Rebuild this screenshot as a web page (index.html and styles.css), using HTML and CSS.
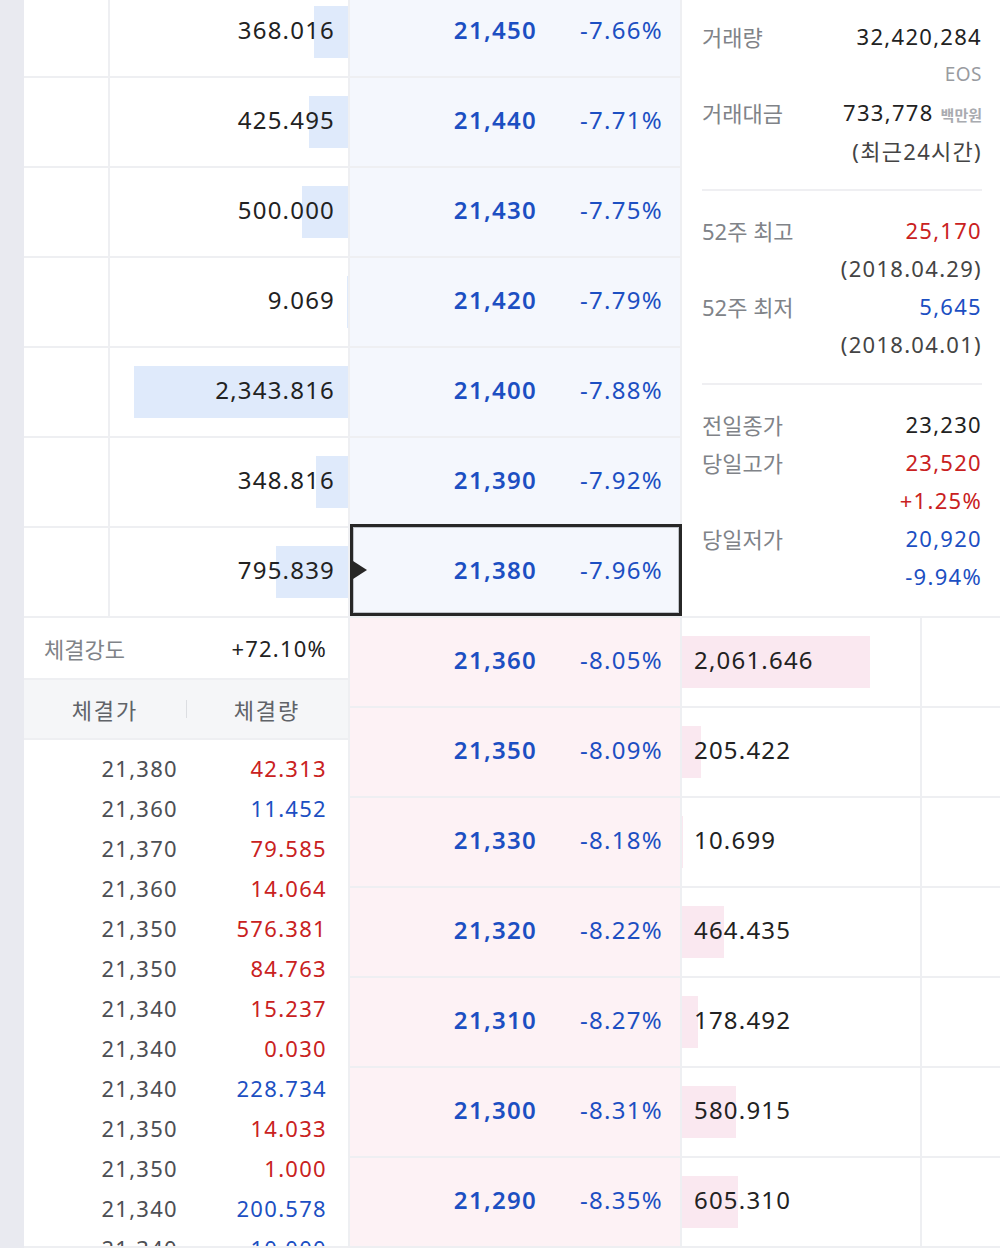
FILE: index.html
```html
<!DOCTYPE html>
<html lang="ko">
<head>
<meta charset="utf-8">
<title>호가</title>
<link rel="stylesheet" href="styles.css">
</head>
<body>
<div class="page">
  <section class="asks">
    <aside class="info">
      <div class="group first">
        <div class="irow"><span class="lbl">거래량</span><span class="val">32,420,284</span></div>
        <div class="irow"><span></span><span class="unit">EOS</span></div>
        <div class="irow"><span class="lbl">거래대금</span><span class="val">733,778 <small>백만원</small></span></div>
        <div class="irow"><span></span><span class="val sub">(최근24시간)</span></div>
      </div>
      <div class="group">
        <div class="irow"><span class="lbl">52주 최고</span><span class="val up">25,170</span></div>
        <div class="irow"><span></span><span class="val sub">(2018.04.29)</span></div>
        <div class="irow"><span class="lbl">52주 최저</span><span class="val down">5,645</span></div>
        <div class="irow"><span></span><span class="val sub">(2018.04.01)</span></div>
      </div>
      <div class="group last">
        <div class="irow"><span class="lbl">전일종가</span><span class="val">23,230</span></div>
        <div class="irow"><span class="lbl">당일고가</span><span class="val up">23,520</span></div>
        <div class="irow"><span></span><span class="val up">+1.25%</span></div>
        <div class="irow"><span class="lbl">당일저가</span><span class="val down">20,920</span></div>
        <div class="irow"><span></span><span class="val down">-9.94%</span></div>
      </div>
    </aside>

    <div class="blank"></div>
    <div class="vol ask-vol" style="--w:34px">368.016</div>
    <div class="price ask-price"><span class="p">21,450</span><span class="r">-7.66%</span></div>

    <div class="blank"></div>
    <div class="vol ask-vol" style="--w:39px">425.495</div>
    <div class="price ask-price"><span class="p">21,440</span><span class="r">-7.71%</span></div>

    <div class="blank"></div>
    <div class="vol ask-vol" style="--w:46px">500.000</div>
    <div class="price ask-price"><span class="p">21,430</span><span class="r">-7.75%</span></div>

    <div class="blank"></div>
    <div class="vol ask-vol" style="--w:1px">9.069</div>
    <div class="price ask-price"><span class="p">21,420</span><span class="r">-7.79%</span></div>

    <div class="blank"></div>
    <div class="vol ask-vol" style="--w:214px">2,343.816</div>
    <div class="price ask-price"><span class="p">21,400</span><span class="r">-7.88%</span></div>

    <div class="blank"></div>
    <div class="vol ask-vol" style="--w:32px">348.816</div>
    <div class="price ask-price"><span class="p">21,390</span><span class="r">-7.92%</span></div>

    <div class="blank"></div>
    <div class="vol ask-vol" style="--w:72px">795.839</div>
    <div class="price ask-price sel"><span class="p">21,380</span><span class="r">-7.96%</span></div>
  </section>

  <section class="bids">
    <div class="trades">
      <div class="strength"><span class="slbl">체결강도</span><span class="sval">+72.10%</span></div>
      <div class="thead"><span>체결가</span><span class="th2">체결량</span></div>
      <div class="tlist">
        <span class="tp">21,380</span><span class="tv up">42.313</span>
        <span class="tp">21,360</span><span class="tv down">11.452</span>
        <span class="tp">21,370</span><span class="tv up">79.585</span>
        <span class="tp">21,360</span><span class="tv up">14.064</span>
        <span class="tp">21,350</span><span class="tv up">576.381</span>
        <span class="tp">21,350</span><span class="tv up">84.763</span>
        <span class="tp">21,340</span><span class="tv up">15.237</span>
        <span class="tp">21,340</span><span class="tv up">0.030</span>
        <span class="tp">21,340</span><span class="tv down">228.734</span>
        <span class="tp">21,350</span><span class="tv up">14.033</span>
        <span class="tp">21,350</span><span class="tv up">1.000</span>
        <span class="tp">21,340</span><span class="tv down">200.578</span>
        <span class="tp">21,340</span><span class="tv down">10.000</span>
      </div>
    </div>

    <div class="price bid-price"><span class="p">21,360</span><span class="r">-8.05%</span></div>
    <div class="vol bid-vol" style="--w:188px">2,061.646</div>
    <div class="blank"></div>

    <div class="price bid-price"><span class="p">21,350</span><span class="r">-8.09%</span></div>
    <div class="vol bid-vol" style="--w:19px">205.422</div>
    <div class="blank"></div>

    <div class="price bid-price"><span class="p">21,330</span><span class="r">-8.18%</span></div>
    <div class="vol bid-vol" style="--w:1px">10.699</div>
    <div class="blank"></div>

    <div class="price bid-price"><span class="p">21,320</span><span class="r">-8.22%</span></div>
    <div class="vol bid-vol" style="--w:42px">464.435</div>
    <div class="blank"></div>

    <div class="price bid-price"><span class="p">21,310</span><span class="r">-8.27%</span></div>
    <div class="vol bid-vol" style="--w:16px">178.492</div>
    <div class="blank"></div>

    <div class="price bid-price"><span class="p">21,300</span><span class="r">-8.31%</span></div>
    <div class="vol bid-vol" style="--w:54px">580.915</div>
    <div class="blank"></div>

    <div class="price bid-price"><span class="p">21,290</span><span class="r">-8.35%</span></div>
    <div class="vol bid-vol" style="--w:56px">605.310</div>
    <div class="blank"></div>
  </section>
</div>
</body>
</html>
```

FILE: styles.css
```css
* {
  box-sizing: border-box;
}

html,
body {
  margin: 0;
  padding: 0;
}

body {
  background: #e9eaf0;
  font-family: "Noto Sans", "Noto Sans CJK KR", sans-serif;
  color: #222;
  overflow: hidden;
}

.page {
  margin: -12px 0 0 24px;
  display: flex;
  flex-direction: column;
  gap: 2px;
  padding-bottom: 2px;
  background: #eeeff2;
}

.asks {
  display: grid;
  grid-template-columns: 84px 238px 330px 318px;
  grid-auto-rows: 88px;
  gap: 2px;
}

.bids {
  display: grid;
  grid-template-columns: 324px 330px 238px 78px;
  grid-auto-rows: 88px;
  gap: 2px;
}

.blank {
  background: #fff;
}

/* volume cells */
.vol {
  display: flex;
  align-items: center;
  padding-bottom: 6px;
  font-size: 24px;
  letter-spacing: 1.2px;
  color: #222;
  background-color: #fff;
  background-repeat: no-repeat;
  background-size: var(--w) 52px;
}

.ask-vol {
  justify-content: flex-end;
  padding-right: 13px;
  background-image: linear-gradient(#dfeafb, #dfeafb);
  background-position: right center;
}

.bid-vol {
  justify-content: flex-start;
  padding-left: 12px;
  background-image: linear-gradient(#fae8f0, #fae8f0);
  background-position: left center;
}

/* price cells */
.price {
  display: grid;
  grid-template-columns: 1fr 126px;
  align-items: center;
  padding-right: 17px;
  padding-bottom: 6px;
  font-size: 24px;
  letter-spacing: 1.3px;
  color: #1c4fc2;
  text-align: right;
}

.price .p {
  font-weight: 600;
}

.ask-price {
  background: #f4f7fd;
}

.bid-price {
  background: #fdf2f5;
}

.sel {
  position: relative;
}

.sel::before {
  content: "";
  position: absolute;
  top: -4px;
  left: 0;
  right: -2px;
  bottom: 0;
  border: 3px solid #272727;
  box-shadow: inset 0 0 0 1px #bfc3c9;
  z-index: 1;
}

.sel::after {
  content: "";
  position: absolute;
  left: 3px;
  top: 50%;
  margin-top: -11px;
  border-left: 14px solid #272727;
  border-top: 9px solid transparent;
  border-bottom: 9px solid transparent;
  z-index: 2;
}

/* info panel */
.info {
  grid-column: 4;
  grid-row: 1 / span 7;
  background: #fff;
  padding: 0 18px 0 20px;
}

.group {
  padding: 20px 0;
  border-bottom: 2px solid #efeff2;
}

.group.first {
  padding-top: 29px;
}

.group.last {
  border-bottom: 0;
}

.irow {
  display: flex;
  justify-content: space-between;
  align-items: center;
  height: 38px;
}

.lbl {
  font-size: 22px;
  color: #808388;
}

.val {
  font-size: 22px;
  letter-spacing: 1.3px;
  color: #222;
}

.val small {
  font-size: 15px;
  letter-spacing: 0;
  color: #a9abb0;
  font-weight: 700;
}

.val.sub {
  color: #444;
}

.unit {
  font-size: 19px;
  color: #999ba0;
  letter-spacing: 0.5px;
}

.up {
  color: #c92121;
}

.down {
  color: #1c4fc2;
}

/* trades panel */
.trades {
  grid-column: 1;
  grid-row: 1 / span 7;
  background: #fff;
  overflow: hidden;
  display: flex;
  flex-direction: column;
}

.strength {
  height: 62px;
  flex: none;
  display: flex;
  justify-content: space-between;
  align-items: center;
  padding: 0 21px 0 20px;
  border-bottom: 2px solid #eeeff2;
}

.slbl {
  font-size: 22px;
  color: #808388;
}

.sval {
  font-size: 22px;
  letter-spacing: 1.2px;
  color: #222;
}

.thead {
  height: 60px;
  flex: none;
  display: grid;
  grid-template-columns: 162px 162px;
  align-items: center;
  text-align: center;
  background: #f5f6f8;
  border-bottom: 2px solid #eeeff2;
  font-size: 22px;
  letter-spacing: 2px;
  color: #606368;
}

.th2 {
  position: relative;
}

.th2::before {
  content: "";
  position: absolute;
  left: 0;
  top: 50%;
  margin-top: -9px;
  height: 18px;
  width: 1px;
  background: #dcdee2;
}

.tlist {
  display: grid;
  grid-template-columns: 162px 162px;
  grid-auto-rows: 40px;
  align-items: center;
  padding-top: 8px;
  font-size: 22px;
  letter-spacing: 1.3px;
  text-align: right;
}

.tp {
  padding-right: 8px;
  color: #4d4f54;
}

.tv {
  padding-right: 21px;
}
```
